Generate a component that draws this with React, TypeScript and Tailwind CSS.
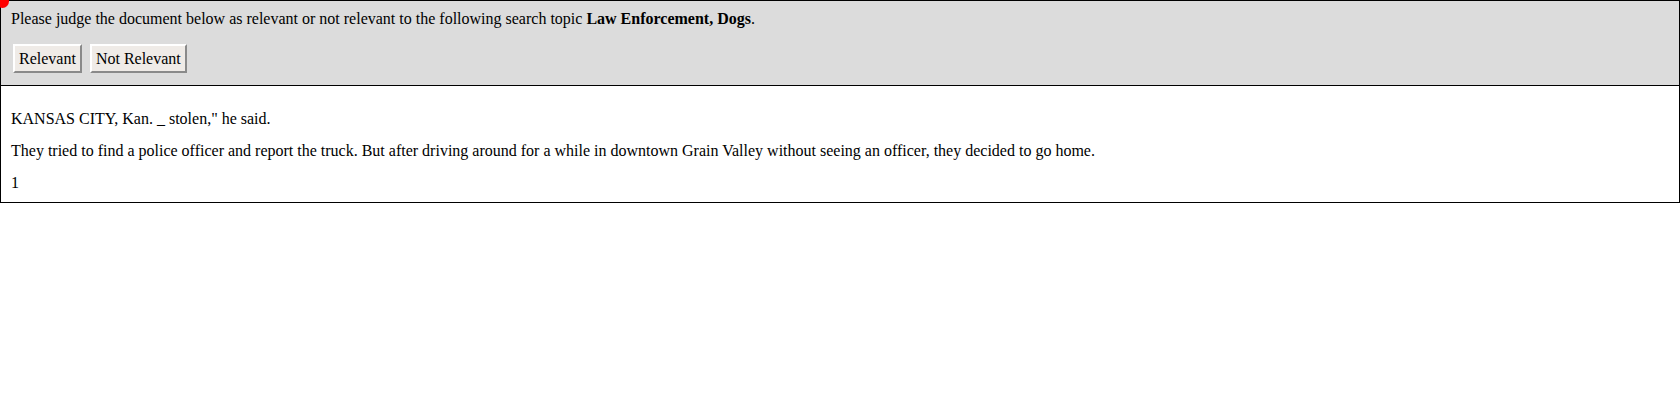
export default function App() {
  return (
    <div className="relative font-['Liberation_Serif',serif] text-[16px] text-black">
      {/* marker in the corner */}
      <div className="absolute -left-[4px] -top-[5px] z-10 h-[13px] w-[13px] rounded-full bg-[#ff0000]" />

      <div className="border border-black bg-[#dcdcdc] px-[10px] pt-[8px] pb-[12px]">
        <p className="leading-[19px]">
          Please judge the document below as relevant or not relevant to the following search topic{' '}
          <b>Law Enforcement, Dogs</b>.
        </p>
        <div className="mt-[16px] flex gap-[8px] pl-[2px]">
          <button className="h-[29px] border-2 border-t-[#ffffff] border-l-[#ffffff] border-r-[#8a8a8a] border-b-[#8a8a8a] bg-[#efebe7] px-[4px] leading-[19px]">
            Relevant
          </button>
          <button className="h-[29px] border-2 border-t-[#ffffff] border-l-[#ffffff] border-r-[#8a8a8a] border-b-[#8a8a8a] bg-[#efebe7] px-[4px] leading-[19px]">
            Not Relevant
          </button>
        </div>
      </div>

      <div className="border border-t-0 border-black bg-white px-[10px] pt-[23px] pb-[10px]">
        <p className="leading-[19px]">KANSAS CITY, Kan. _ stolen,&quot; he said.</p>
        <p className="mt-[13px] leading-[19px]">
          They tried to find a police officer and report the truck. But after driving around for a while in downtown Grain Valley without seeing an officer, they decided to go home.
        </p>
        <p className="mt-[13px] leading-[19px]">1</p>
      </div>
    </div>
  );
}
